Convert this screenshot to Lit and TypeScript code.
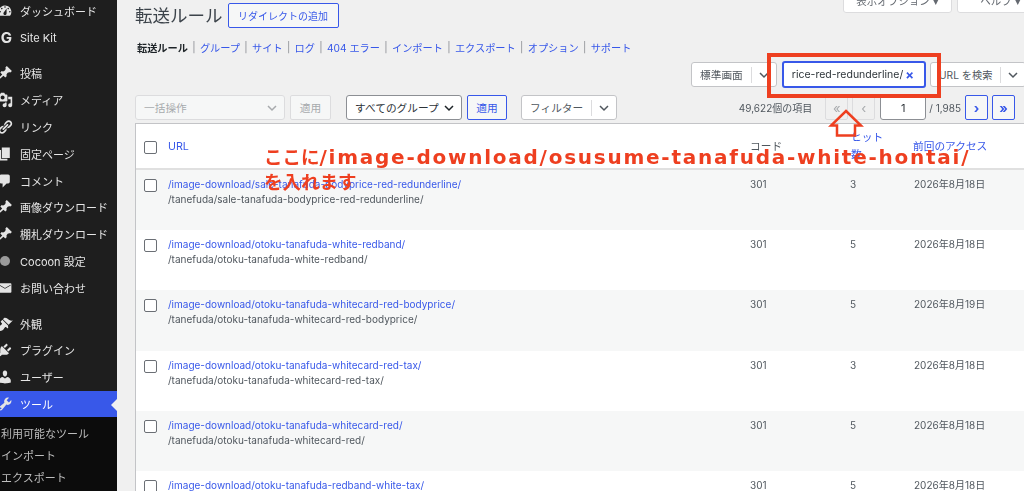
import { LitElement, html, css, svg } from "lit";
import { customElement } from "lit/decorators.js";

const icons: Record<string, string> = {
  dashboard:
    "M3.76 16h12.48c1.1-1.37 1.76-3.11 1.76-5 0-4.42-3.58-8-8-8s-8 3.58-8 8c0 1.89.66 3.63 1.76 5zM10 4c.55 0 1 .45 1 1s-.45 1-1 1-1-.45-1-1 .45-1 1-1zM6 6c.55 0 1 .45 1 1s-.45 1-1 1-1-.45-1-1 .45-1 1-1zm8 0c.55 0 1 .45 1 1s-.45 1-1 1-1-.45-1-1 .45-1 1-1zm-5.37 5.55L12 7v6c0 1.1-.9 2-2 2s-2-.9-2-2c0-.57.24-1.08.63-1.45zM4 10c.55 0 1 .45 1 1s-.45 1-1 1-1-.45-1-1 .45-1 1-1zm12 0c.55 0 1 .45 1 1s-.45 1-1 1-1-.45-1-1 .45-1 1-1z",
  pin: "M10.44 3.02l1.82-1.82 6.36 6.35-1.83 1.82c-1.05-.68-2.48-.57-3.41.36l-.75.75c-.92.93-1.04 2.35-.35 3.41l-1.83 1.82-2.41-2.41-2.8 2.79c-.42.42-3.38 2.71-3.8 2.29s1.86-3.39 2.28-3.81l2.79-2.79L4.1 9.36l1.83-1.82c1.05.69 2.48.57 3.4-.36l.75-.75c.93-.92 1.05-2.35.36-3.41z",
  media:
    "M13 11V4c0-.55-.45-1-1-1h-1.67L9 1H5L3.67 3H2c-.55 0-1 .45-1 1v7c0 .55.45 1 1 1h10c.55 0 1-.45 1-1zM7 4.5c1.38 0 2.5 1.12 2.5 2.5S8.38 9.5 7 9.5 4.5 8.38 4.5 7 5.62 4.5 7 4.5zM14 6h5v10.5c0 1.38-1.12 2.5-2.5 2.5S14 17.88 14 16.5s1.12-2.5 2.5-2.5c.17 0 .34.02.5.05V9h-3V6zm-4 8.05V13h2v3.5c0 1.38-1.12 2.5-2.5 2.5S7 17.88 7 16.5 8.12 14 9.5 14c.17 0 .34.02.5.05z",
  links:
    "M17.74 2.76c1.68 1.69 1.68 4.41 0 6.1l-1.53 1.52c-1.12 1.12-2.7 1.47-4.14 1.09l2.62-2.61.76-.77.76-.76c.84-.84.84-2.2 0-3.04-.84-.85-2.2-.85-3.04 0l-.77.76-3.38 3.38c-.37-1.44-.02-3.02 1.1-4.14l1.52-1.53c1.69-1.68 4.42-1.68 6.1 0zM8.59 13.43l5.34-5.34c.42-.42.42-1.1 0-1.52-.44-.43-1.13-.39-1.53 0l-5.33 5.34c-.42.42-.42 1.1 0 1.52.44.43 1.13.39 1.52 0zm-.76 2.29l4.14-4.15c.38 1.44.03 3.02-1.09 4.14l-1.52 1.53c-1.69 1.68-4.41 1.68-6.1 0-1.68-1.68-1.68-4.42 0-6.1l1.53-1.52c1.12-1.12 2.7-1.47 4.14-1.1l-4.14 4.15c-.85.84-.85 2.2 0 3.05.84.84 2.2.84 3.04 0z",
  page: "M6 15V2h10v13H6zm-1 1h8v2H3V5h2v11z",
  comment:
    "M5 2h9c1.1 0 2 .9 2 2v7c0 1.1-.9 2-2 2h-2l-5 5v-5H5c-1.1 0-2-.9-2-2V4c0-1.1.9-2 2-2z",
  email:
    "M3 4h14c.55 0 1 .45 1 1v10c0 .55-.45 1-1 1H3c-.55 0-1-.45-1-1V5c0-.55.45-1 1-1zm0 2v1l7 4 7-4V6l-7 4z",
  brush:
    "M14.48 11.06L7.41 3.99l1.5-1.5c.5-.56 2.3-.47 3.51.32 1.21.8 1.43 1.28 2.91 2.1 1.18.64 2.45 1.26 4.45.85zm-.71.71L6.7 4.7 4.93 6.47c-.39.39-.39 1.02 0 1.41l1.06 1.06c.39.39.39 1.03 0 1.42-.6.6-1.43 1.11-2.21 1.69-.35.26-.7.53-1.01.84C1.43 13.73.5 15.88 2.31 17.7s3.96.89 5.28-.46c.3-.3.57-.65.84-1 .57-.78 1.08-1.61 1.69-2.21.39-.39 1.02-.39 1.41 0l1.06 1.06c.39.39 1.03.39 1.42 0z",
  plugin:
    "M13.11 4.36L9.87 7.6 8 5.73l3.24-3.24c.35-.34 1.05-.2 1.56.32.52.51.66 1.21.31 1.55zm-8 1.77l.91-1.12 9.01 9.01-1.19.84c-.71.71-2.63 1.16-3.82 1.16H6.14L4.9 17.26c-.59.59-1.54.59-2.12 0-.59-.58-.59-1.53 0-2.12l1.24-1.24v-3.88c0-1.13.4-3.19 1.09-3.89zm7.26 3.97l3.24-3.24c.34-.35 1.04-.21 1.55.31.52.51.66 1.21.31 1.55l-3.24 3.25z",
  users:
    "M10 9.25c-2.27 0-2.73-3.44-2.73-3.44C7 4.02 7.82 2 9.97 2c2.16 0 2.98 2.02 2.71 3.81 0 0-.41 3.44-2.68 3.44zm0 2.57L12.72 10c2.39 0 4.52 2.33 4.52 4.53v2.49s-3.65 1.13-7.24 1.13c-3.65 0-7.24-1.13-7.24-1.13v-2.49c0-2.25 1.94-4.53 4.43-4.53z",
  tools:
    "M16.68 9.77c-1.34 1.34-3.3 1.67-4.95.99l-5.41 6.52c-.99.99-2.59.99-3.58 0s-.99-2.59 0-3.57l6.52-5.42c-.68-1.65-.35-3.61.99-4.95 1.28-1.28 3.12-1.62 4.72-1.06l-2.89 2.89 2.82 2.82 2.86-2.87c.53 1.58.18 3.39-1.08 4.65zM3.81 16.21c.4.39 1.04.39 1.43 0 .4-.4.4-1.04 0-1.43-.39-.4-1.03-.4-1.43 0-.39.39-.39 1.03 0 1.43z",
};

const menu = [
  [
    { icon: "dashboard", label: "ダッシュボード" },
    { icon: "g", label: "Site Kit" },
  ],
  [
    { icon: "pin", label: "投稿" },
    { icon: "media", label: "メディア" },
    { icon: "links", label: "リンク" },
    { icon: "page", label: "固定ページ" },
    { icon: "comment", label: "コメント" },
    { icon: "pin", label: "画像ダウンロード" },
    { icon: "pin", label: "棚札ダウンロード" },
    { icon: "dot", label: "Cocoon 設定" },
    { icon: "email", label: "お問い合わせ" },
  ],
  [
    { icon: "brush", label: "外観" },
    { icon: "plugin", label: "プラグイン" },
    { icon: "users", label: "ユーザー" },
    { icon: "tools", label: "ツール", active: true },
  ],
];

const tabs = ["グループ", "サイト", "ログ", "404 エラー", "インポート", "エクスポート", "オプション", "サポート"];

const rows = [
  ["sale-tanafuda-bodyprice-red-redunderline", "3", "2026年8月18日"],
  ["otoku-tanafuda-white-redband", "5", "2026年8月18日"],
  ["otoku-tanafuda-whitecard-red-bodyprice", "5", "2026年8月19日"],
  ["otoku-tanafuda-whitecard-red-tax", "3", "2026年8月18日"],
  ["otoku-tanafuda-whitecard-red", "5", "2026年8月18日"],
  ["otoku-tanafuda-redband-white-tax", "5", "2026年8月18日"],
];

const chevron = html`<svg class="chev" viewBox="0 0 12 12" width="12" height="12">
  <path d="M2 4l4 4 4-4" fill="none" stroke="currentColor" stroke-width="1.5" />
</svg>`;

@customElement("app-root")
export class AppRoot extends LitElement {
  static styles = css`
    :host {
      display: flex;
      position: relative;
      width: 1024px;
      height: 491px;
      overflow: hidden;
      background: #f0f0f0;
      color: #50575e;
      font-family: Inter, "Noto Sans CJK JP", sans-serif;
      font-size: 10.5px;
    }
    .side {
      flex: none;
      width: 117px;
      margin-top: -2.5px;
      background: #1e1e1e;
      color: #e6e6e6;
      display: flex;
      flex-direction: column;
      font-size: 11px;
      filter: blur(0.3px);
    }
    .group {
      display: flex;
      flex-direction: column;
    }
    .group + .group {
      margin-top: 9px;
    }
    .item {
      height: 26.8px;
      display: flex;
      align-items: center;
      gap: 7px;
      position: relative;
      white-space: nowrap;
    }
    .item.active {
      background: #3858e9;
      color: #fff;
    }
    .item.active::after {
      content: "";
      position: absolute;
      right: 0;
      top: 8px;
      border: 6px solid transparent;
      border-right-color: #f0f0f0;
      border-left-width: 0;
    }
    .ic {
      flex: none;
      width: 16px;
      height: 16px;
      margin-left: -3px;
      fill: #e4e4e4;
    }
    .g {
      flex: none;
      width: 13px;
      font: 700 15px Inter, sans-serif;
      text-align: center;
      color: #e4e4e4;
    }
    .dot {
      flex: none;
      width: 10px;
      height: 10px;
      margin-right: 3px;
      border-radius: 50%;
      background: #9a9a9a;
    }
    .sub {
      flex: 1;
      background: #0c0c0c;
      padding-top: 6px;
      color: #bdbdbd;
      display: flex;
      flex-direction: column;
    }
    .sub span {
      height: 22px;
      line-height: 22px;
      padding-left: 1px;
      white-space: nowrap;
    }
    .main {
      flex: 1;
      min-width: 0;
      padding-left: 18px;
      display: flex;
      flex-direction: column;
      filter: blur(0.3px);
    }
    .main > * {
      flex: none;
    }
    .head {
      display: flex;
      align-items: flex-start;
      height: 38px;
    }
    .title {
      font-size: 17.5px;
      line-height: 31px;
      color: #3c434a;
      margin-right: 5px;
      white-space: nowrap;
    }
    .add {
      margin-top: 3px;
      height: 25px;
      width: 111px;
      box-sizing: border-box;
      display: flex;
      align-items: center;
      justify-content: center;
      background: #f6f7f7;
      border: 1px solid #3858e9;
      border-radius: 2px;
      color: #3858e9;
      font-size: 10px;
      white-space: nowrap;
    }
    .meta {
      margin-left: auto;
      margin-top: -12px;
      display: flex;
      gap: 5px;
      margin-right: -20px;
    }
    .meta span {
      box-sizing: border-box;
      height: 25px;
      width: 109px;
      display: flex;
      align-items: center;
      justify-content: center;
      background: #fff;
      border: 1px solid #dcdcde;
      border-radius: 3px;
      font-size: 10.5px;
      color: #646970;
      white-space: nowrap;
    }
    .meta span + span {
      width: 87px;
    }
    .tabs {
      display: flex;
      align-items: center;
      height: 18px;
      padding-left: 2px;
      font-size: 10.2px;
      white-space: nowrap;
      color: #3858e9;
    }
    .tabs b {
      color: #1d2327;
      font-weight: 700;
    }
    .tabs i {
      font-style: normal;
      color: #8c8f94;
      padding: 0 4.3px;
    }
    .search {
      display: flex;
      align-items: center;
      height: 25px;
      margin-top: 6px;
      margin-left: 556px;
      width: 360px;
    }
    .ctl {
      box-sizing: border-box;
      flex: none;
      height: 25px;
      display: flex;
      align-items: center;
      background: #fff;
      border: 1px solid #c3c4c7;
      border-radius: 3px;
      font-size: 10.7px;
      color: #50575e;
      white-space: nowrap;
    }
    .ctl .lbl {
      flex: 1;
      padding-left: 8px;
    }
    .ctl .sep {
      width: 1px;
      height: 16px;
      background: #dcdcde;
    }
    .ctl .chev {
      margin: 0 6px;
      color: #50575e;
    }
    .view {
      width: 86px;
    }
    .box {
      width: 144px;
      height: 27px;
      margin-left: 5px;
      border: 2px solid #3858e9;
      padding: 0 10px 0 8px;
      color: #2c3338;
      justify-content: flex-end;
      overflow: hidden;
      font-size: 10.5px;
    }
    .box u {
      width: 1px;
      height: 13px;
      background: #1d2327;
    }
    .box em {
      font: 700 13px Inter, sans-serif;
      color: #3858e9;
      margin-left: 2px;
    }
    .urlsel {
      width: 96px;
      margin-left: 4px;
      font-size: 10.2px;
    }
    .tools {
      display: flex;
      align-items: center;
      height: 25px;
      margin-top: 8px;
      width: 880px;
    }
    .off {
      background: #f6f7f7;
      border-color: #dcdcde;
      color: #a7aaad;
    }
    .ctl.off {
      color: #a7aaad;
    }
    .bulk {
      width: 150px;
    }
    .bulk .chev {
      color: #a7aaad;
    }
    .btn {
      box-sizing: border-box;
      height: 25px;
      display: flex;
      align-items: center;
      justify-content: center;
      border: 1px solid #3858e9;
      border-radius: 2px;
      background: #f6f7f7;
      color: #3858e9;
      font-size: 10.7px;
    }
    .btn.off {
      border-color: #dcdcde;
      color: #a7aaad;
    }
    .apply {
      width: 41px;
      margin-left: 5px;
    }
    .apply2 {
      width: 40px;
      margin-left: 5px;
    }
    .groupsel {
      width: 116px;
      margin-left: 15px;
      border-color: #8c8f94;
      color: #2c3338;
    }
    .groupsel .chev {
      color: #1d2327;
      margin-left: 0;
    }
    .filter {
      width: 96px;
      margin-left: 14px;
    }
    .count {
      margin-left: auto;
      margin-right: 13px;
      white-space: nowrap;
      font-size: 10px;
    }
    .pg {
      box-sizing: border-box;
      flex: none;
      width: 23px;
      height: 25px;
      display: flex;
      align-items: center;
      justify-content: center;
      border-radius: 2px;
      font: 700 13px Inter, sans-serif;
      border: 1px solid #3858e9;
      color: #3858e9;
      background: #f6f7f7;
    }
    .pg + .pg {
      margin-left: 4px;
    }
    .pg.off {
      border-color: #dcdcde;
      background: #f0f0f0;
      color: #a7aaad;
      font-weight: 400;
    }
    .cur {
      box-sizing: border-box;
      width: 46px;
      height: 25px;
      margin-left: 5px;
      background: #fff;
      border: 1px solid #8c8f94;
      border-radius: 3px;
      display: flex;
      align-items: center;
      justify-content: center;
      color: #2c3338;
      font-size: 11px;
    }
    .total {
      margin: 0 4px 0 3px;
      white-space: nowrap;
      font-size: 10px;
    }
    .table {
      margin-top: 3px;
      width: 900px;
      border-top: 1px solid #c3c4c7;
      border-left: 1px solid #c3c4c7;
      background: #fff;
      box-sizing: border-box;
    }
    .row {
      display: grid;
      grid-template-columns: 32px 576px 100px 62px 1fr;
      height: 60.2px;
      box-sizing: border-box;
      padding-top: 7px;
      font-size: 10px;
      line-height: 15px;
    }
    .row:nth-child(even) {
      background: #f6f7f7;
    }
    .row.top {
      height: 46px;
      padding-top: 15px;
      border-bottom: 2px solid #e0e0e0;
      color: #3858e9;
      font-size: 10.7px;
    }
    .row.top .code {
      color: #50575e;
      padding-left: 6px;
    }
    .row.top .hits {
      width: 33px;
      line-height: 17px;
      margin-top: -10px;
      padding-left: 7px;
      white-space: normal;
      word-break: break-all;
    }
    .cb {
      box-sizing: border-box;
      display: block;
      width: 13px;
      height: 13px;
      margin: 2px 0 0 8px;
      border: 1px solid #6b6f75;
      border-radius: 2px;
      background: #fff;
    }
    .row .a {
      color: #3858e9;
      white-space: nowrap;
    }
    .row .t {
      color: #50575e;
      white-space: nowrap;
    }
    .cell {
      padding-left: 6px;
      white-space: nowrap;
    }
    .cell.url {
      padding-left: 0;
    }
    .cell.date {
      padding-left: 8px;
    }
    .row.top .cell.date {
      padding-left: 7px;
    }
    .note {
      position: absolute;
      left: 264px;
      top: 145px;
      font: 700 18.5px/24.5px "DejaVu Sans", "Noto Sans CJK JP", sans-serif;
      color: #ee3f20;
      white-space: nowrap;
    }
    .note span {
      font-size: 20px;
      letter-spacing: 1.75px;
    }
    .frame {
      position: absolute;
      left: 767px;
      top: 53px;
      width: 174px;
      height: 45px;
      box-sizing: border-box;
      border: 4.5px solid #ee3f20;
    }
    .arrow {
      position: absolute;
      left: 828px;
      top: 108px;
    }
  `;

  private icon(name: string) {
    if (name === "g") return html`<span class="g">G</span>`;
    if (name === "dot") return html`<span class="dot"></span>`;
    return html`<svg class="ic" viewBox="0 0 20 20">${svg`<path d=${icons[name]} />`}</svg>`;
  }

  render() {
    return html`
      <nav class="side">
        ${menu.map(
          (g) => html`<div class="group">
            ${g.map(
              (m: any) => html`<div class="item ${m.active ? "active" : ""}">
                ${this.icon(m.icon)}<span>${m.label}</span>
              </div>`
            )}
          </div>`
        )}
        <div class="sub">
          <span>利用可能なツール</span><span>インポート</span><span>エクスポート</span>
        </div>
      </nav>
      <main class="main">
        <header class="head">
          <div class="title">転送ルール</div>
          <div class="add">リダイレクトの追加</div>
          <div class="meta"><span>表示オプション ▾</span><span>ヘルプ ▾</span></div>
        </header>
        <div class="tabs">
          <b>転送ルール</b>${tabs.map((t) => html`<i>|</i><span>${t}</span>`)}
        </div>
        <div class="search">
          <div class="ctl view"><span class="lbl">標準画面</span><span class="sep"></span>${chevron}</div>
          <div class="ctl box"><span>rice-red-redunderline/</span><u></u><em>×</em></div>
          <div class="ctl urlsel"><span class="lbl">URL を検索</span><span class="sep"></span>${chevron}</div>
        </div>
        <div class="tools">
          <div class="ctl off bulk"><span class="lbl">一括操作</span>${chevron}</div>
          <div class="btn off apply">適用</div>
          <div class="ctl groupsel"><span class="lbl">すべてのグループ</span>${chevron}</div>
          <div class="btn apply2">適用</div>
          <div class="ctl filter"><span class="lbl">フィルター</span><span class="sep"></span>${chevron}</div>
          <span class="count">49,622個の項目</span>
          <span class="pg off">«</span><span class="pg off">‹</span>
          <span class="cur">1</span><span class="total">/ 1,985</span>
          <span class="pg">›</span><span class="pg">»</span>
        </div>
        <section class="table">
          <div class="row top">
            <span class="cb"></span>
            <span class="cell url">URL</span>
            <span class="cell code">コード</span>
            <span class="cell hits">ヒット数</span>
            <span class="cell date">前回のアクセス</span>
          </div>
          ${rows.map(
            ([slug, hits, date]) => html`<div class="row">
              <span class="cb"></span>
              <div class="cell url">
                <div class="a">/image-download/${slug}/</div>
                <div class="t">/tanefuda/${slug}/</div>
              </div>
              <span class="cell">301</span>
              <span class="cell">${hits}</span>
              <span class="cell date">${date}</span>
            </div>`
          )}
        </section>
      </main>
      <div class="frame"></div>
      <svg class="arrow" width="36" height="30" viewBox="0 0 36 30">
        <path d="M18 3L33 17.5H27V27.5H9V17.5H3z" fill="none" stroke="#ee3f20" stroke-width="2.5" />
      </svg>
      <div class="note">ここに<span>/image-download/osusume-tanafuda-white-hontai/</span><br />を入れます</div>
    `;
  }
}
